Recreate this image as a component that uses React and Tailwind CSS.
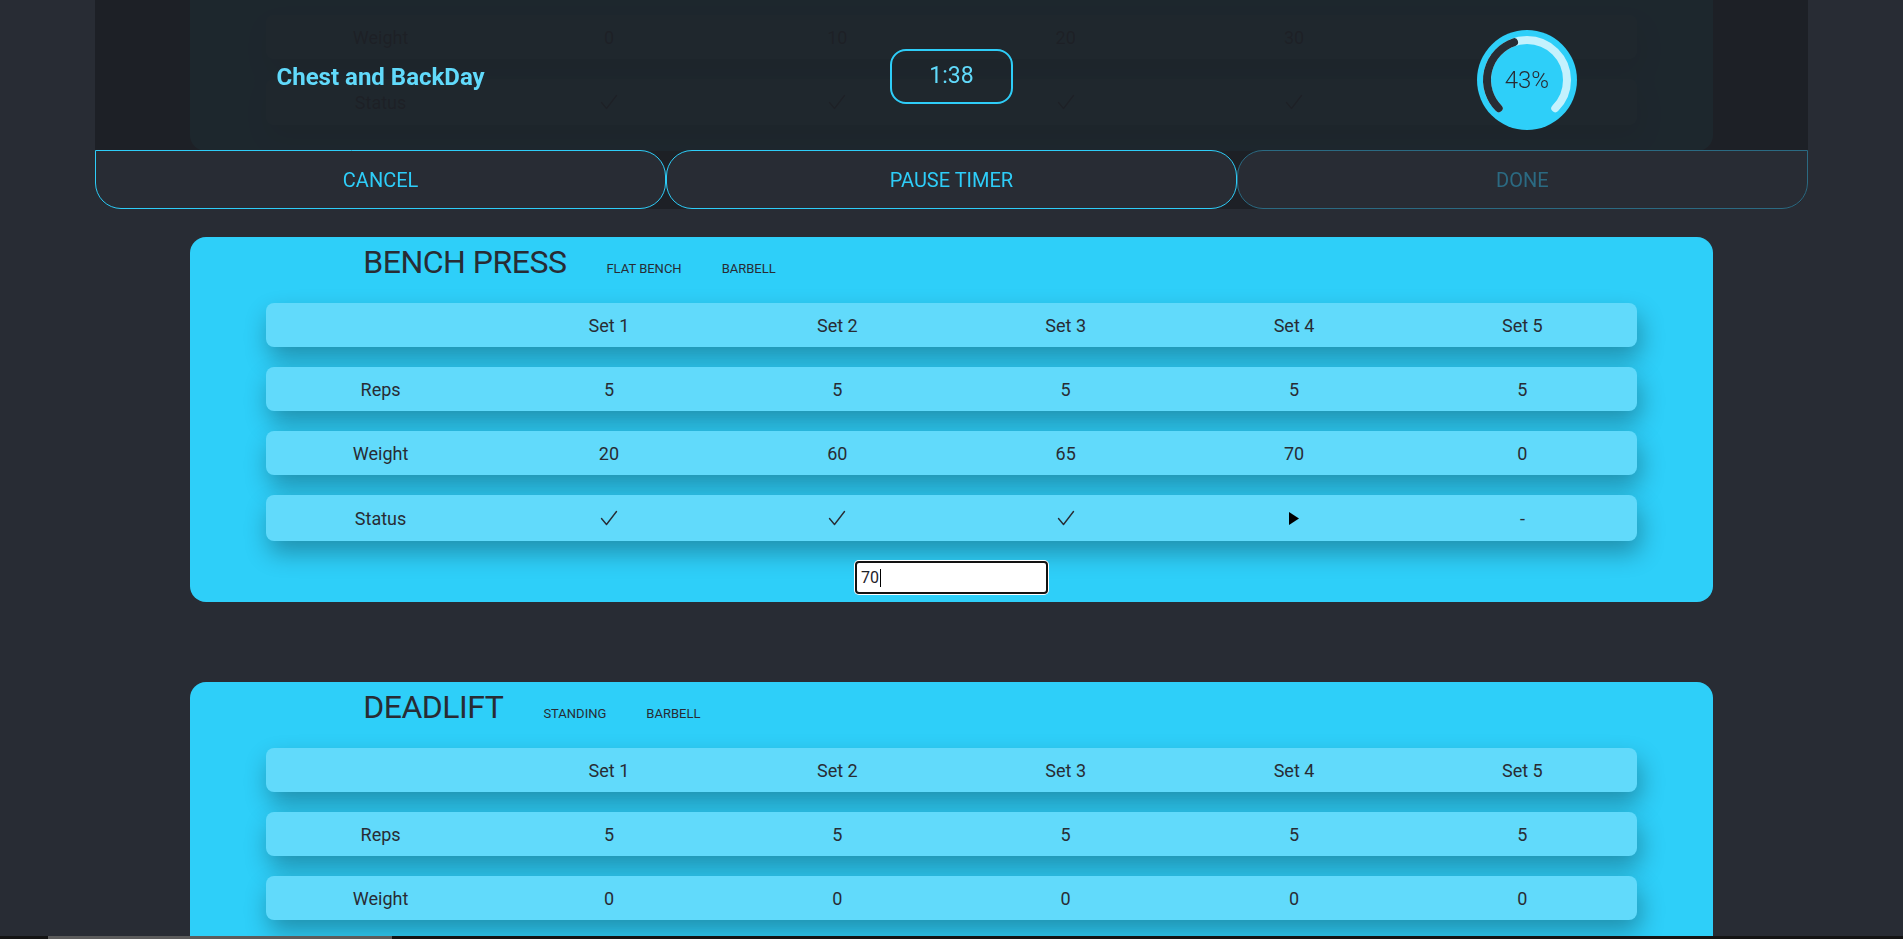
import React from "react";

const SETS = ["Set 1", "Set 2", "Set 3", "Set 4", "Set 5"];

function Play() {
  return (
    <svg width="10" height="13" viewBox="0 0 10 13" className="block">
      <path d="M0 0 L10 6.5 L0 13 Z" fill="#000" />
    </svg>
  );
}

function Check({ color = "#282c34" }) {
  return (
    <svg width="18" height="16" viewBox="0 0 18 16" className="block">
      <path
        d="M1.5 8.5 L6.5 14.5 L16.5 1.5"
        fill="none"
        stroke={color}
        strokeWidth="1.4"
        strokeLinecap="round"
        strokeLinejoin="round"
      />
    </svg>
  );
}

function Row({ label, cells, tall }) {
  return (
    <div
      className={`grid grid-cols-6 items-center rounded-lg bg-[#61dafb] text-[18px] text-[#282c34] shadow-[3px_12px_24px_rgba(0,0,0,0.3)] ${
        tall ? "h-[46px]" : "h-[44px]"
      }`}
    >
      <div className="text-center">{label}</div>
      {cells.map((c, i) => (
        <div key={i} className="flex items-center justify-center text-center">
          {c}
        </div>
      ))}
    </div>
  );
}

function Card({ title, tags, reps, weights, status, input, className = "" }) {
  return (
    <div
      className={`w-[80%] rounded-2xl bg-[#2ecff9] pt-[6px] ${
        input ? "pb-[8px]" : "pb-[33px]"
      } ${className}`}
    >
      <div className="flex items-baseline pl-[173px] text-[#282c34]">
        <h2 className="text-[32px] leading-[38px] tracking-[-0.5px]">{title}</h2>
        {tags.map((t) => (
          <span key={t} className="ml-[40px] text-[13px] uppercase">
            {t}
          </span>
        ))}
      </div>
      <div className="mx-auto mt-[22px] flex w-[90%] flex-col gap-[20px]">
        <Row label="" cells={SETS} />
        <Row label="Reps" cells={reps} />
        <Row label="Weight" cells={weights} />
        {status && <Row label="Status" cells={status} tall />}
      </div>
      {input && (
        <div className="mt-[20px] flex justify-center">
          <div className="flex h-[33px] w-[193px] items-center rounded-[4px] border-2 border-[#121212] bg-white pl-[4px] text-[16px] text-[#1e2229] ring-1 ring-white">
            <span>{input}</span>
            <span className="ml-[1px] h-[18px] w-[1px] bg-black" />
          </div>
        </div>
      )}
    </div>
  );
}

function Gauge() {
  return (
    <div className="relative mt-[9px] h-[100px] w-[100px]">
      <svg width="100" height="100" viewBox="0 0 100 100">
        <circle cx="50" cy="50" r="50" fill="#2ecff9" />
        <path
          d="M21.72 78.28 A40 40 0 1 1 78.28 78.28"
          fill="none"
          stroke="#c4f1fd"
          strokeWidth="8"
          strokeLinecap="round"
        />
        <path
          d="M21.72 78.28 A40 40 0 0 1 37.04 12.16"
          fill="none"
          stroke="#282c34"
          strokeWidth="8"
          strokeLinecap="round"
        />
      </svg>
      <div className="absolute inset-0 flex items-center justify-center text-[24px] font-light text-[#282c34]">
        43%
      </div>
    </div>
  );
}

export default function App() {
  const c = <Check />;
  return (
    <div className="relative h-screen overflow-hidden bg-[#282c34] font-[family-name:Roboto,'Noto_Sans',sans-serif]">
      {/* scrolled content */}
      <div className="flex flex-col items-center">
        {/* visible lower part of the previous exercise card */}
        <div className="w-[80%] rounded-b-2xl bg-[#2ecff9] pb-[26px] pt-[15px]">
          <div className="mx-auto flex w-[90%] flex-col gap-[20px]">
            <Row label="Weight" cells={["0", "10", "20", "30", "40"]} />
            <Row label="Status" cells={[c, c, c, c, c]} tall />
          </div>
        </div>
        <Card
          className="mt-[86px]"
          title="BENCH PRESS"
          tags={["Flat Bench", "Barbell"]}
          reps={["5", "5", "5", "5", "5"]}
          weights={["20", "60", "65", "70", "0"]}
          status={[c, c, c, <Play key="p" />, "-"]}
          input="70"
        />
        <Card
          className="mt-[80px]"
          title="DEADLIFT"
          tags={["Standing", "Barbell"]}
          reps={["5", "5", "5", "5", "5"]}
          weights={["0", "0", "0", "0", "0"]}
        />
      </div>

      {/* fixed header */}
      <div className="fixed left-[5%] top-0 w-[90%]">
        <div className="grid h-[150px] grid-cols-3 items-center bg-[rgba(29,32,37,0.965)]">
          <div className="pt-[3px] text-center text-[24px] font-bold text-[#61dafb]">
            Chest and BackDay
          </div>
          <div className="flex justify-center">
            <div className="mt-[2px] flex h-[55px] w-[123px] items-center justify-center rounded-[16px] border-2 border-[#2ecdf8] text-[23px] text-[#61dafb]">
              1:38
            </div>
          </div>
          <div className="flex justify-center pl-[9px]">
            <Gauge />
          </div>
        </div>
        <div className="grid h-[59px] grid-cols-3 rounded-b-[26px] bg-[rgba(29,32,37,0.965)] text-[20px]">
          <button className="rounded-[26px] rounded-tl-none border border-[#2ecdf8] bg-[#282c34] text-[#2ecdf8]">
            CANCEL
          </button>
          <button className="rounded-[26px] border border-[#2ecdf8] bg-[#282c34] text-[#2ecdf8]">
            PAUSE TIMER
          </button>
          <button className="rounded-[26px] rounded-tr-none border border-[#2b6a82] bg-[#282c34] text-[#2b6a82]">
            DONE
          </button>
        </div>
      </div>

      {/* horizontal scrollbar strip */}
      <div className="fixed bottom-0 left-0 h-[3px] w-full bg-[#141414]">
        <div className="ml-[48px] h-full w-[344px] bg-[#5c5c5c]" />
      </div>
    </div>
  );
}
